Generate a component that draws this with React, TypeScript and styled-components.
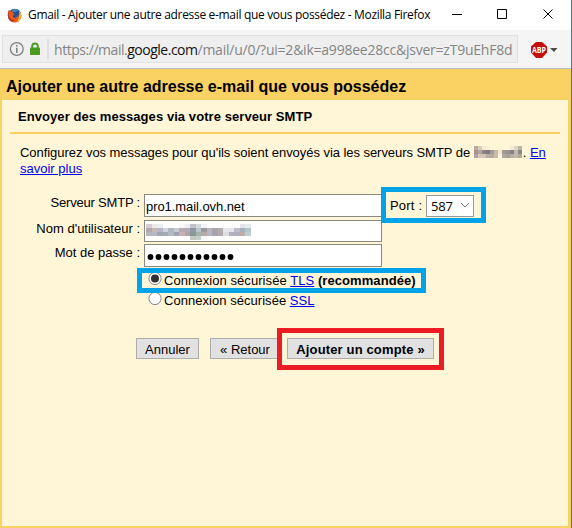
import React from "react";
import styled, { createGlobalStyle } from "styled-components";

const GlobalStyle = createGlobalStyle`
  * { box-sizing: border-box; }
  html, body { margin: 0; padding: 0; }
  body { font-family: "Liberation Sans", Arial, sans-serif; font-size: 13px; color: #000; overflow: hidden; }
  a { color: #0000ee; text-decoration: underline; }
`;

const Window = styled.div`
  width: 572px;
  height: 528px;
  display: flex;
  flex-direction: column;
  background: #fff;
  border-right: 1px solid #2f7fae;
`;

const TitleBar = styled.header`
  height: 30px;
  flex: none;
  display: flex;
  align-items: center;
  padding-left: 7px;
`;

const WindowTitle = styled.span`
  font: 12px/16px "Open Sans", "Noto Sans", sans-serif;
  letter-spacing: -0.32px;
  white-space: pre;
  margin-left: 6px;
  width: 422px;
`;

const WindowControls = styled.svg`
  display: block;
  flex: none;
`;

const Toolbar = styled.div`
  height: 39px;
  flex: none;
  display: flex;
  padding: 5px 0 0 2px;
  background: #f5f5f5;
  border-bottom: 1px solid #b9bcc2;
`;

const AddressBar = styled.div`
  width: 516px;
  height: 28px;
  flex: none;
  display: flex;
  align-items: center;
  background: #efefef;
  border: 1px solid #e1e1e1;
`;

const Url = styled.div`
  margin-left: 5px;
  padding-top: 2px;
  white-space: pre;
  color: #858585;
  font: 14px/24px "Open Sans", "Noto Sans", sans-serif;
  letter-spacing: -0.23px;
  b { font-weight: 400; color: #111; letter-spacing: -0.5px; }
`;

const UrlScheme = styled.span`
  letter-spacing: -0.46px;
`;

const BlockerIcon = styled.svg`
  display: block;
  margin-left: 12px;
`;

const Page = styled.main`
  flex: 1;
  display: flex;
  flex-direction: column;
  background: #fad163;
  padding: 0 3px 2px 2px;
`;

const PageTitle = styled.h1`
  margin: 0;
  height: 31px;
  flex: none;
  padding: 8px 0 0 4px;
  font-size: 16px;
  line-height: 20px;
  white-space: pre;
`;

const Panel = styled.section`
  flex: 1;
  position: relative;
  background: #fff5d7;
  padding: 0 8px;
`;

const SectionTitle = styled.h2`
  margin: 0;
  height: 34px;
  padding: 8px 0 0 8px;
  border-bottom: 2px solid #fad163;
  font-size: 13px;
  line-height: 17px;
  letter-spacing: 0.07px;
  white-space: pre;
`;

const Intro = styled.p`
  margin: 0;
  padding: 11px 0 0 10px;
  height: 60px;
  line-height: 16px;
  white-space: pre;
`;

const Line = styled.span<{ $track?: string }>`
  letter-spacing: ${(p) => p.$track ?? "0"};
  white-space: pre;
`;

const Mosaic = styled.svg`
  display: inline-block;
  vertical-align: -1px;
`;

const FormGrid = styled.div`
  display: grid;
  grid-template-columns: 134px 238px auto;
  grid-template-rows: 23px 22px 23px;
  row-gap: 2.5px;
`;

const Label = styled.label<{ $track?: string }>`
  text-align: right;
  padding-right: 4px;
  line-height: 17px;
  letter-spacing: ${(p) => p.$track ?? "0"};
  white-space: pre;
`;

const Field = styled.div`
  display: flex;
  align-items: center;
  padding: 2px 0 0 1px;
  background: #fff;
  border: 1px solid #8c8880;
  line-height: 16px;
  letter-spacing: -0.07px;
`;

const PortRow = styled.div`
  display: flex;
  align-items: center;
  padding-left: 8px;
`;

const PortLabel = styled.span`
  width: 36px;
  letter-spacing: 0.2px;
`;

const PortSelect = styled.div`
  width: 48px;
  height: 22px;
  padding: 0 3px 0 4px;
  display: flex;
  align-items: center;
  justify-content: space-between;
  background: #fff;
  border: 1px solid #999;
  font: 13px/18px "Open Sans", "Noto Sans", sans-serif;
  letter-spacing: -0.2px;
`;

const Options = styled.div`
  padding: 4px 0 0 138px;
`;

const Option = styled.div`
  display: flex;
  height: 20px;
  line-height: 20px;
`;

const Radio = styled.svg`
  flex: none;
  margin-right: 2px;
`;

const Actions = styled.div`
  display: flex;
  padding: 27px 0 0 126px;
`;

const Button = styled.button<{ $width: number; $gap?: number; $strong?: boolean }>`
  width: ${(p) => p.$width}px;
  height: 21px;
  margin: 0 0 0 ${(p) => p.$gap ?? 0}px;
  padding: 2px 0 0;
  background: #e1e1e1;
  border: 1px solid #adadad;
  color: #000;
  font: ${(p) => (p.$strong ? "bold " : "")}13px/17px "Liberation Sans", Arial, sans-serif;
  letter-spacing: ${(p) => (p.$strong ? "0.15px" : "0")};
  white-space: pre;
`;

const Highlight = styled.div<{ $x: number; $y: number; $w: number; $h: number; $color: string }>`
  position: absolute;
  left: ${(p) => p.$x}px;
  top: ${(p) => p.$y}px;
  width: ${(p) => p.$w}px;
  height: ${(p) => p.$h}px;
  border: 5px solid ${(p) => p.$color};
  pointer-events: none;
`;

function Pixels({ rows, cell, width, height }: { rows: string[][]; cell: number; width: number; height: number }) {
  return (
    <Mosaic width={width} height={height} shapeRendering="crispEdges">
      {rows.map((row, y) =>
        row.map((fill, x) => <rect key={`${x}-${y}`} x={x * cell} y={y * 4} width={cell} height={4} fill={fill} />),
      )}
    </Mosaic>
  );
}

const domainPixels = [
  ["#b9aaa2", "#d8ccb8", "#f5ebd0", "#fbf1d4", "#fff5d7", "#fff5d7", "#fff5d7", "#fff5d7", "#fff5d7", "#f5ebd0", "#ded4bf", "#b9b5a5"],
  ["#a9918f", "#b5a6a0", "#8a8386", "#817c7c", "#a59a99", "#c9b9a3", "#f3e8cb", "#a49a91", "#9b9493", "#85837e", "#c1b8b4", "#8d8a84"],
  ["#b9a09c", "#d4c5b6", "#d2c5b5", "#b7ada2", "#b5a99f", "#cbbda9", "#fff5d7", "#b0a5a0", "#a9a096", "#baaf9f", "#c4b9aa", "#b0a994"],
];

const userPixels = [
  ["#d5cfd1", "#ebe8ec", "#eceff0", "#fff", "#fff", "#fff", "#f8f8fa", "#f0eef4", "#c3c2c8", "#d5d8dc", "#f1f5f7", "#fff", "#fff", "#fff", "#fff", "#fff", "#fff", "#e5e3e8", "#e4ecef"],
  ["#afa9ac", "#c8b9b8", "#b5b8c8", "#d2d3dc", "#acb9c0", "#c7ccd3", "#b6a9b0", "#b1a8b9", "#9198a3", "#b9c6ca", "#9c999f", "#bbb3bf", "#aba3aa", "#b3acb0", "#e8e6ec", "#e5e5e9", "#bdbcc8", "#a5b1ba", "#b4c6c8"],
  ["#b7b6b8", "#b6b9c5", "#a2a8b1", "#a5adb4", "#b5b9c3", "#a2a1b4", "#c5b2b4", "#b2a3aa", "#899a94", "#a7b2ac", "#b7acaa", "#bbb5c8", "#a7a1b0", "#b4a8b0", "#e0dce4", "#b4b0bd", "#aeb0c1", "#bdaeac", "#bbced1"],
  ["#fff", "#fff", "#fff", "#fff", "#fff", "#fff", "#fff", "#fff", "#c2c9c5", "#c6cec9", "#f8f8f8", "#fff", "#fff", "#fff", "#fff", "#fff", "#fff", "#fff", "#fff"],
];

function FirefoxIcon() {
  return (
    <svg width="15" height="15" viewBox="0 0 15 15">
      <circle cx="7.8" cy="7" r="6.3" fill="#254f91" />
      <path d="M5 2Q8-.2 12 2L9 4 6 4Z" fill="#368ac0" />
      <path d="M1.7 2.1Q3.2 2.4 4.2 3.5L6.6 3.3 5.8 5.1 7.7 6.2 6 7.4Q5.4 9.7 8.2 9.7 10.7 9.3 10.8 6.3 12 7.7 11.1 9.4 13.4 7.7 12.3 3.1 15.5 6.2 14 10.2 12 14.7 7.4 14.4 1.5 14.2.8 8 .5 4.6 1.7 2.1Z" fill="#df5b22" />
      <path d="M12.3 3.1Q15.2 6 13.8 10 12.4 13.4 9.4 13.8 12.6 10.8 12.3 3.1Z" fill="#f6b62b" />
      <path d="M1.8 3.3Q1 7.3 3 10.3 4.8 12.4 8 12.3 3 15 1.1 9.2.3 5.5 1.8 3.3Z" fill="#b53231" />
    </svg>
  );
}

function IdentityIcons() {
  return (
    <svg width="44" height="26" viewBox="0 0 44 26">
      <circle cx="13.8" cy="13" r="6.4" fill="none" stroke="#7b7b7b" strokeWidth="1.2" />
      <path d="M13.8 11.8V17M13.8 9V10.5" stroke="#7b7b7b" strokeWidth="1.5" />
      <path d="M29.2 12V10.3Q29.2 7.5 32 7.5T34.8 10.3V12" fill="none" stroke="#4b9b20" strokeWidth="2" />
      <rect x="27" y="11.5" width="10" height="7.5" rx=".8" fill="#4b9b20" />
    </svg>
  );
}

function RadioButton({ checked }: { checked?: boolean }) {
  return (
    <Radio width="14" height="15" viewBox="0 -1 14 15">
      <circle cx="7" cy="6.5" r="6.1" fill="#fff" stroke="#858585" />
      {checked && <circle cx="7" cy="6.5" r="4" fill="#303030" />}
    </Radio>
  );
}

export default function App() {
  return (
    <>
      <GlobalStyle />
      <Window>
        <TitleBar>
          <FirefoxIcon />
          <WindowTitle>Gmail - Ajouter une autre adresse e-mail que vous possédez - Mozilla Firefox</WindowTitle>
          <WindowControls width="118" height="30" viewBox="0 0 118 30" fill="none" stroke="#000">
            <path d="M2 14.5H12M47.5 9.5h9v9h-9zM93.5 9.5l9 9M102.5 9.5l-9 9" />
          </WindowControls>
        </TitleBar>
        <Toolbar>
          <AddressBar>
            <IdentityIcons />
            <svg width="2" height="20"><path d="M1 0V20" stroke="#cfcfcf" /></svg>
            <Url><UrlScheme>https://mail.</UrlScheme><b>google.com</b>/mail/u/0/?ui=2&amp;ik=a998ee28cc&amp;jsver=zT9uEhF8d</Url>
          </AddressBar>
          <BlockerIcon width="30" height="28" viewBox="0 0 30 28">
            <path d="M6 7h6l5 4.500v6L12 23H6l-5-5.500v-6z" fill="#c60d0d" />
            <text x="2" y="18" fontFamily="Open Sans" fontSize="8" fontWeight="700" fill="#fff" textLength="14" lengthAdjust="spacingAndGlyphs">ABP</text>
            <path d="M20 13h7.500L24 17z" fill="#4a4a4a" />
          </BlockerIcon>
        </Toolbar>
        <Page>
          <PageTitle>Ajouter une autre adresse e-mail que vous possédez</PageTitle>
          <Panel>
            <SectionTitle>Envoyer des messages via votre serveur SMTP</SectionTitle>
            <Intro>
              <Line $track="-0.05px">Configurez vos messages pour qu'ils soient envoyés via les serveurs SMTP de </Line>
              <Pixels rows={domainPixels} cell={4} width={49} height={12} />
              <Line>. <a>En</a>{"\n"}<a>savoir plus</a></Line>
            </Intro>
            <FormGrid>
              <Label $track="-0.2px">Serveur SMTP :</Label>
              <Field>pro1.mail.ovh.net</Field>
              <PortRow><PortLabel>Port :</PortLabel><PortSelect>587<svg width="10" height="7"><path d="M1 1l4 4 4-4" fill="none" stroke="#777" /></svg></PortSelect></PortRow>
              <Label>Nom d'utilisateur :</Label>
              <Field><Pixels rows={userPixels} cell={5.5} width={105} height={16} /></Field>
              <span />
              <Label>Mot de passe :</Label>
              <Field>
                <svg width="90" height="8">{Array.from({ length: 11 }, (_, i) => <circle key={i} cx={4.5 + i * 8} cy="4" r="2.9" />)}</svg>
              </Field>
            </FormGrid>
            <Options>
              <Option><RadioButton checked /><Line $track="0.07px">Connexion sécurisée <a>TLS</a> <b>(recommandée)</b></Line></Option>
              <Option><RadioButton /><Line $track="0.04px">Connexion sécurisée <a>SSL</a></Line></Option>
            </Options>
            <Actions>
              <Button $width={63}>Annuler</Button>
              <Button $width={70} $gap={11}>« Retour</Button>
              <Button $width={147} $gap={7} $strong>Ajouter un compte »</Button>
            </Actions>
            <Highlight $x={379} $y={87} $w={105} $h={36} $color="#00a2e8" />
            <Highlight $x={135} $y={168} $w={289} $h={25} $color="#00a2e8" />
            <Highlight $x={275} $y={228} $w={167} $h={42} $color="#ed1c24" />
          </Panel>
        </Page>
      </Window>
    </>
  );
}
